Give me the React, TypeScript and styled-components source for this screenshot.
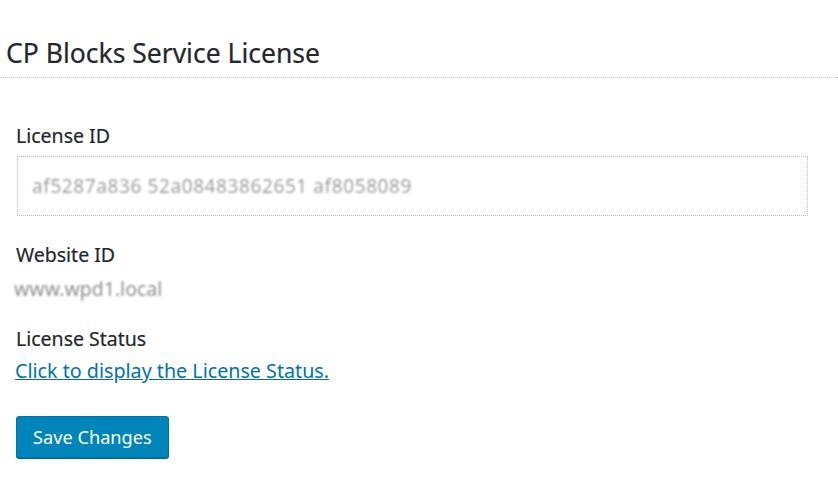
import React from "react";
import styled, { createGlobalStyle } from "styled-components";

const Global = createGlobalStyle`
  html, body { margin: 0; padding: 0; background: #ffffff; }
  body { font-family: "Noto Sans", "Open Sans", sans-serif; color: #23282d; }
`;

const Page = styled.div`
  width: 838px;
  height: 478px;
  display: flex;
  flex-direction: column;
  padding-top: 35px;
  box-sizing: border-box;
  overflow: hidden;
`;

const Title = styled.h2`
  margin: 0;
  padding: 0 0 6px 6px;
  font-size: 26.5px;
  font-weight: 400;
  line-height: 36px;
  color: #23282d;
  -webkit-text-stroke: 0.2px #23282d;
  border-bottom: 1px dotted #c8c8c8;
`;

const Form = styled.div`
  display: flex;
  flex-direction: column;
  padding: 45px 0 0 16px;
`;

const Field = styled.div<{ $gap: number }>`
  display: flex;
  flex-direction: column;
  margin-bottom: ${(p) => p.$gap}px;
`;

const Label = styled.div<{ $gap: number }>`
  font-size: 19.5px;
  line-height: 26px;
  font-weight: 400;
  color: #23282d;
  -webkit-text-stroke: 0.2px #23282d;
  margin-bottom: ${(p) => p.$gap}px;
`;

const InputBox = styled.div`
  width: 791px;
  height: 60px;
  box-sizing: border-box;
  border: 1px dotted #bdbdbd;
  margin-left: 1px;
  display: flex;
  align-items: center;
  padding-left: 14px;
`;

const Blurred = styled.span`
  font-size: 19px;
  line-height: 26px;
  color: #a0a0a0;
  filter: blur(1.3px);
  letter-spacing: 0.6px;
`;

const Plain = styled.span`
  font-size: 19.5px;
  line-height: 24px;
  color: #8f8f8f;
  filter: blur(1.3px);
  margin-left: -2px;
`;

const Link = styled.a`
  font-size: 19.7px;
  line-height: 26px;
  color: #0073aa;
  text-decoration: underline;
  cursor: pointer;
  margin-left: -1px;
`;

const Button = styled.button`
  align-self: flex-start;
  height: 42px;
  padding: 0 16px;
  font-family: "Noto Sans", "Open Sans", sans-serif;
  font-size: 18.2px;
  color: #ffffff;
  background: #0085ba;
  border: 1px solid #0073aa;
  border-radius: 3px;
  box-shadow: 0 1px 0 #006799;
  cursor: pointer;
`;

export default function App() {
  return (
    <>
      <Global />
      <Page>
        <Title>CP Blocks Service License</Title>
        <Form>
          <Field $gap={26}>
            <Label $gap={7}>License ID</Label>
            <InputBox>
              <Blurred>af5287a836 52a08483862651 af8058089</Blurred>
            </InputBox>
          </Field>
          <Field $gap={25}>
            <Label $gap={9}>Website ID</Label>
            <Plain>www.wpd1.local</Plain>
          </Field>
          <Field $gap={32}>
            <Label $gap={6}>License Status</Label>
            <Link>Click to display the License Status.</Link>
          </Field>
          <Button>Save Changes</Button>
        </Form>
      </Page>
    </>
  );
}
